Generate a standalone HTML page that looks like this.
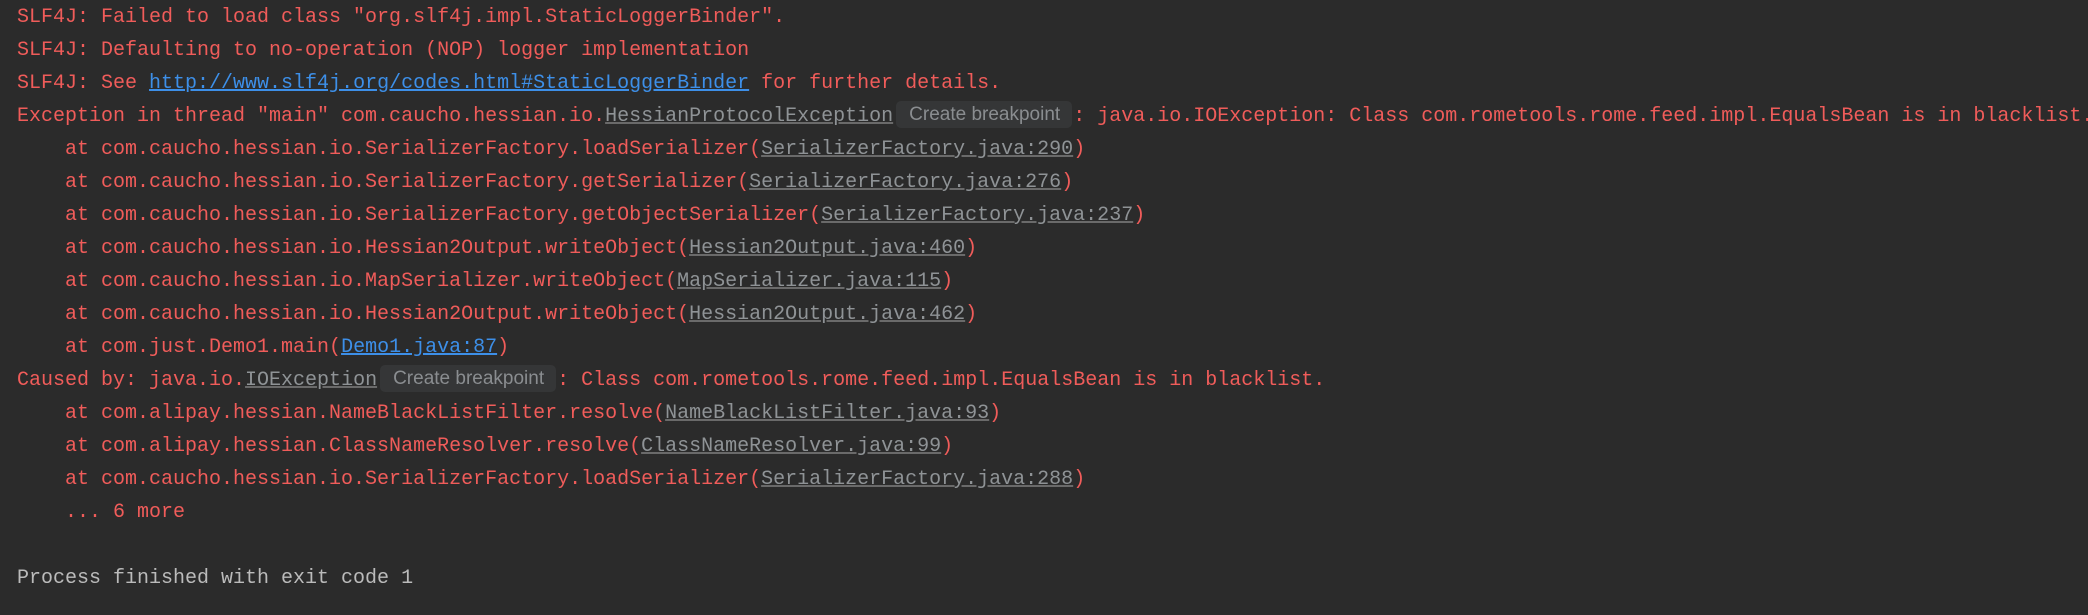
<!DOCTYPE html>
<html><head><meta charset="utf-8"><style>
html,body{margin:0;padding:0;background:#2b2b2b;width:2088px;height:615px;overflow:hidden}
.c{position:absolute;left:17px;top:1px;font-family:"Liberation Mono",monospace;font-size:20px;line-height:33px;color:#f05c5a}
.l{height:33px;white-space:pre}
a{color:#3d8fe8;text-decoration:underline}
.g{color:#8f9396;text-decoration:underline;text-decoration-color:#6a6a6a}
.chip{display:inline-block;font-family:"Liberation Sans",sans-serif;font-size:19px;line-height:27px;color:#8a8d90;background:#353637;border-radius:5px;padding:0 12px 0 13px;margin:0 1px 0 3px;vertical-align:1px}
.p{color:#bbbbbb}
</style></head><body><div class="c"><div class="l">SLF4J: Failed to load class "org.slf4j.impl.StaticLoggerBinder".</div><div class="l">SLF4J: Defaulting to no-operation (NOP) logger implementation</div><div class="l">SLF4J: See <a>http://www.slf4j.org/codes.html#StaticLoggerBinder</a> for further details.</div><div class="l">Exception in thread "main" com.caucho.hessian.io.<span class="g">HessianProtocolException</span><span class="chip">Create breakpoint</span>: java.io.IOException: Class com.rometools.rome.feed.impl.EqualsBean is in blacklist.</div><div class="l">    at com.caucho.hessian.io.SerializerFactory.loadSerializer(<span class="g">SerializerFactory.java:290</span>)</div><div class="l">    at com.caucho.hessian.io.SerializerFactory.getSerializer(<span class="g">SerializerFactory.java:276</span>)</div><div class="l">    at com.caucho.hessian.io.SerializerFactory.getObjectSerializer(<span class="g">SerializerFactory.java:237</span>)</div><div class="l">    at com.caucho.hessian.io.Hessian2Output.writeObject(<span class="g">Hessian2Output.java:460</span>)</div><div class="l">    at com.caucho.hessian.io.MapSerializer.writeObject(<span class="g">MapSerializer.java:115</span>)</div><div class="l">    at com.caucho.hessian.io.Hessian2Output.writeObject(<span class="g">Hessian2Output.java:462</span>)</div><div class="l">    at com.just.Demo1.main(<a>Demo1.java:87</a>)</div><div class="l">Caused by: java.io.<span class="g">IOException</span><span class="chip">Create breakpoint</span>: Class com.rometools.rome.feed.impl.EqualsBean is in blacklist.</div><div class="l">    at com.alipay.hessian.NameBlackListFilter.resolve(<span class="g">NameBlackListFilter.java:93</span>)</div><div class="l">    at com.alipay.hessian.ClassNameResolver.resolve(<span class="g">ClassNameResolver.java:99</span>)</div><div class="l">    at com.caucho.hessian.io.SerializerFactory.loadSerializer(<span class="g">SerializerFactory.java:288</span>)</div><div class="l">    ... 6 more</div><div class="l"> </div><div class="l p">Process finished with exit code 1</div></div></body></html>
